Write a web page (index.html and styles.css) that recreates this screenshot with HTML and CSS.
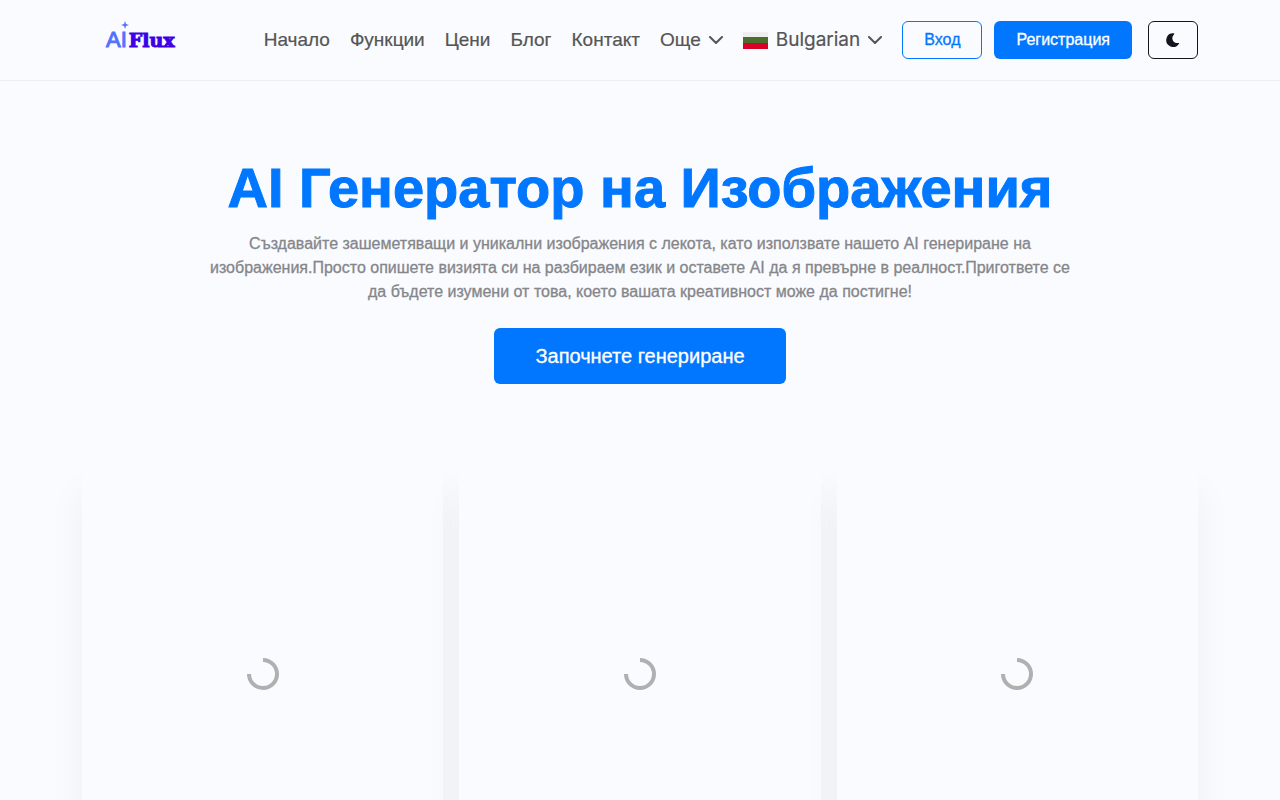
FILE: index.html
```html
<!DOCTYPE html>
<html lang="bg">
<head>
<meta charset="utf-8">
<meta name="viewport" content="width=device-width, initial-scale=1">
<title>AI Flux</title>
<link rel="stylesheet" href="styles.css">
</head>
<body>
<header class="header">
  <div class="container bar">
    <a class="logo" href="#" aria-label="AI Flux">
      <svg class="logo-star" viewBox="0 0 8 8" aria-hidden="true"><path d="M4 0 5 3 8 4 5 5 4 8 3 5 0 4 3 3Z"/></svg>
      <span class="logo-ai">AI</span><span class="logo-flux">Flux</span>
    </a>
    <nav class="nav">
      <a class="nav-link" href="#">Начало</a>
      <a class="nav-link" href="#">Функции</a>
      <a class="nav-link" href="#">Цени</a>
      <a class="nav-link" href="#">Блог</a>
      <a class="nav-link" href="#">Контакт</a>
      <button class="nav-link" type="button">Още
        <svg class="chevron" viewBox="0 0 14 8" aria-hidden="true"><path d="M1 1 7 7 13 1"/></svg>
      </button>
      <button class="nav-link" type="button">
        <svg class="flag" viewBox="0 0 25 17" aria-hidden="true"><path fill="#eee" d="M0 0h25v6H0z"/><path fill="#496e2d" d="M0 5h25v6H0z"/><path fill="#d80027" d="M0 11h25v6H0z"/></svg>
        <span class="language-name">Bulgarian</span>
        <svg class="chevron" viewBox="0 0 14 8" aria-hidden="true"><path d="M1 1 7 7 13 1"/></svg>
      </button>
    </nav>
    <div class="actions">
      <a class="btn btn-outline" href="#">Вход</a>
      <a class="btn btn-primary" href="#">Регистрация</a>
      <button class="btn btn-theme" type="button" aria-label="Тъмен режим">
        <svg class="moon" viewBox="0 0 14 14" aria-hidden="true"><path d="M7.500 0.200A6.900 6.900 0 1 0 13 10.800C13.400 10.300 13 9.900 12.500 10C7.500 11 4.200 5.300 8 1.400C8.600 .800 8.400 .200 7.500 .200Z"/></svg>
      </button>
    </div>
  </div>
</header>
<main>
  <section class="hero">
    <h1 class="title">AI Генератор на Изображения</h1>
    <p class="lead">Създавайте зашеметяващи и уникални изображения с лекота, като използвате нашето AI генериране на<br>изображения.Просто опишете визията си на разбираем език и оставете AI да я превърне в реалност.Пригответе се<br>да бъдете изумени от това, което вашата креативност може да постигне!</p>
    <a class="btn btn-primary btn-large" href="#">Започнете генериране</a>
  </section>
  <section class="container gallery">
    <div class="card"><svg class="spinner" viewBox="0 0 34 34" aria-hidden="true"><path d="M17 3A14 14 0 1 1 3 17"/></svg></div>
    <div class="card"><svg class="spinner" viewBox="0 0 34 34" aria-hidden="true"><path d="M17 3A14 14 0 1 1 3 17"/></svg></div>
    <div class="card"><svg class="spinner" viewBox="0 0 34 34" aria-hidden="true"><path d="M17 3A14 14 0 1 1 3 17"/></svg></div>
  </section>
</main>
</body>
</html>
```
FILE: styles.css
```css
* { box-sizing: border-box; }
body {
  margin: 0;
  background: #fafbff;
  color: #555;
  font: 16px/24px "Liberation Sans", Arial, sans-serif;
}
a { color: inherit; text-decoration: none; }
button { font: inherit; color: inherit; background: none; border: 0; padding: 0; cursor: pointer; }
svg { display: block; flex: none; }

.container { max-width: 1140px; margin: 0 auto; padding: 0 12px; }

.header { border-bottom: 1px solid #eee; }
.bar { display: flex; align-items: center; min-height: 80px; }

.logo { position: relative; display: flex; align-items: baseline; gap: 2px; margin-left: 24px; margin-right: auto; line-height: 24px; }
.logo-star { position: absolute; left: 15px; top: -7px; width: 8px; height: 8px; fill: #5271ff; }
.logo-ai { font-size: 22px; color: #5271ff; -webkit-text-stroke: 1px #5271ff; }
.logo-flux { font: bold 19px/24px "DejaVu Serif", "Liberation Serif", serif; color: #3d00e6; -webkit-text-stroke: 1px #3d00e6; }

.nav { display: flex; align-items: center; gap: 20px; }
.nav-link { display: flex; align-items: center; gap: 8px; font-size: 19px; line-height: 28px; -webkit-text-stroke: 0.2px #555; }
.language-name { font-family: Inter, sans-serif; }
.chevron { width: 14px; height: 8px; fill: none; stroke: #555; stroke-width: 2; stroke-linecap: round; stroke-linejoin: round; }
.flag { width: 25px; height: 17px; }

.actions { display: flex; align-items: center; gap: 12px; margin-left: 20px; }
.btn { display: inline-flex; align-items: center; justify-content: center; height: 38px; padding: 0 21px; border: 1px solid transparent; border-radius: 6px; -webkit-text-stroke: 0.3px currentColor; }
.btn-outline { border-color: #0177ff; color: #0177ff; }
.btn-primary { background: #0177ff; color: #fff; }
.btn-theme { width: 50px; margin-left: 4px; border-color: #12151f; color: #12151f; }
.moon { width: 14px; height: 14px; fill: currentColor; }

.hero { max-width: 904px; margin: 0 auto; padding: 72px 12px 80px; text-align: center; }
.title { margin: 0 0 9px; font-size: 56px; line-height: 70px; font-weight: bold; color: #0177ff; -webkit-text-stroke: 1px #0177ff; }
.lead { margin: 0 0 24px; color: #85868a; -webkit-text-stroke: 0.3px currentColor; }
.btn-large { height: 56px; padding: 0 40px; font-size: 20px; }

.gallery { display: grid; grid-template-columns: repeat(3, 1fr); gap: 16px; }
.card { display: flex; align-items: center; justify-content: center; height: 420px; background: #fafbff; box-shadow: 0 28px 36px rgba(0, 0, 0, 0.05); }
.spinner { width: 34px; height: 34px; fill: none; stroke: #b0b0b0; stroke-width: 4; }
```
